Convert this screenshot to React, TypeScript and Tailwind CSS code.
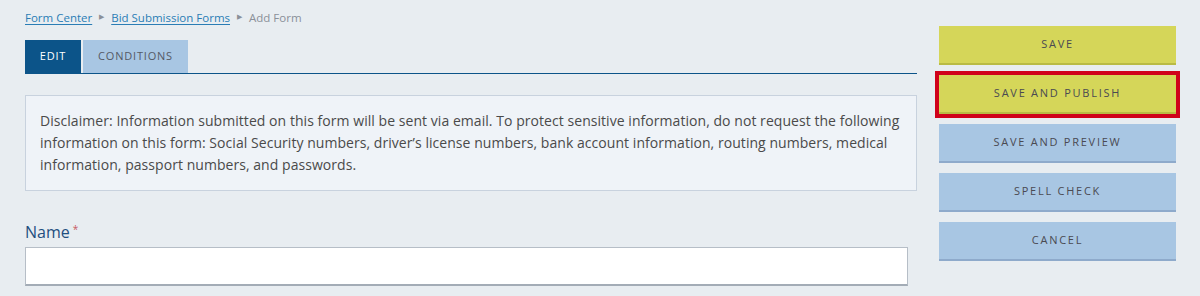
import React from "react";

const font = { fontFamily: '"Open Sans", "Liberation Sans", sans-serif' };

function ActionButton({ label, tone, highlight }: { label: string; tone: "yellow" | "blue"; highlight?: boolean }) {
  const base =
    tone === "yellow"
      ? "bg-[#d5d659] border-b-2 border-[#b9bb45]"
      : "bg-[#a8c6e3] border-b-2 border-[#8eaacb]";
  return (
    <button
      className={`${base} h-[39px] w-full text-[11px] tracking-[1.75px] text-[#4a4a52] uppercase ${
        highlight ? "outline-4 outline-[#d0021b] outline-offset-0" : ""
      }`}
    >
      {label}
    </button>
  );
}

export default function App() {
  return (
    <div className="w-[1200px] h-[296px] bg-[#e8edf1] overflow-hidden flex" style={font}>
      <div className="w-[917px] pl-[25px] pt-[9px] flex flex-col">
        <div className="flex items-center text-[11.5px] h-[17px]">
          <a className="text-[#2a7db5] underline underline-offset-2">Form Center</a>
          <span className="text-[#8a9099] text-[7px] mx-[7px]">▶</span>
          <a className="text-[#2a7db5] underline underline-offset-2">Bid Submission Forms</a>
          <span className="text-[#8a9099] text-[7px] mx-[7px]">▶</span>
          <span className="text-[#8a9099]">Add Form</span>
        </div>
        <div className="mt-[14px] flex gap-[2px] border-b border-[#0c5489] h-[34px]">
          <div className="w-[56px] h-[33px] bg-[#0c5489] text-white text-[11px] tracking-[0.8px] flex items-center justify-center">
            EDIT
          </div>
          <div className="w-[105px] h-[33px] bg-[#a8c6e3] text-[#555a66] text-[11px] tracking-[0.8px] flex items-center justify-center">
            CONDITIONS
          </div>
        </div>
        <div className="mt-[21px] h-[96px] border border-[#c8d2de] bg-[#eff3f8] pl-[14px] pr-[14px] pt-[14px] text-[14px] tracking-[0.05px] leading-[22px] text-[#4a4a4a]">
          Disclaimer: Information submitted on this form will be sent via email. To protect sensitive information, do not request the following information on this form: Social Security numbers, driver’s license numbers, bank account information, routing numbers, medical information, passport numbers, and passwords.
        </div>
        <div className="mt-[30px] text-[16px] leading-[22px] text-[#1f4f80] flex items-start">
          Name<span className="text-[#c75a62] text-[10px] ml-[3px] leading-[16px]">*</span>
        </div>
        <div className="mt-[4px] w-[883px] h-[39px] bg-white border border-[#b6bec7] border-b-2 border-b-[#a3acb6]" />
      </div>
      <div className="ml-[22px] w-[237px] pt-[26px] flex flex-col gap-[10px]">
        <ActionButton label="Save" tone="yellow" />
        <ActionButton label="Save and Publish" tone="yellow" highlight />
        <ActionButton label="Save and Preview" tone="blue" />
        <ActionButton label="Spell Check" tone="blue" />
        <ActionButton label="Cancel" tone="blue" />
      </div>
    </div>
  );
}
